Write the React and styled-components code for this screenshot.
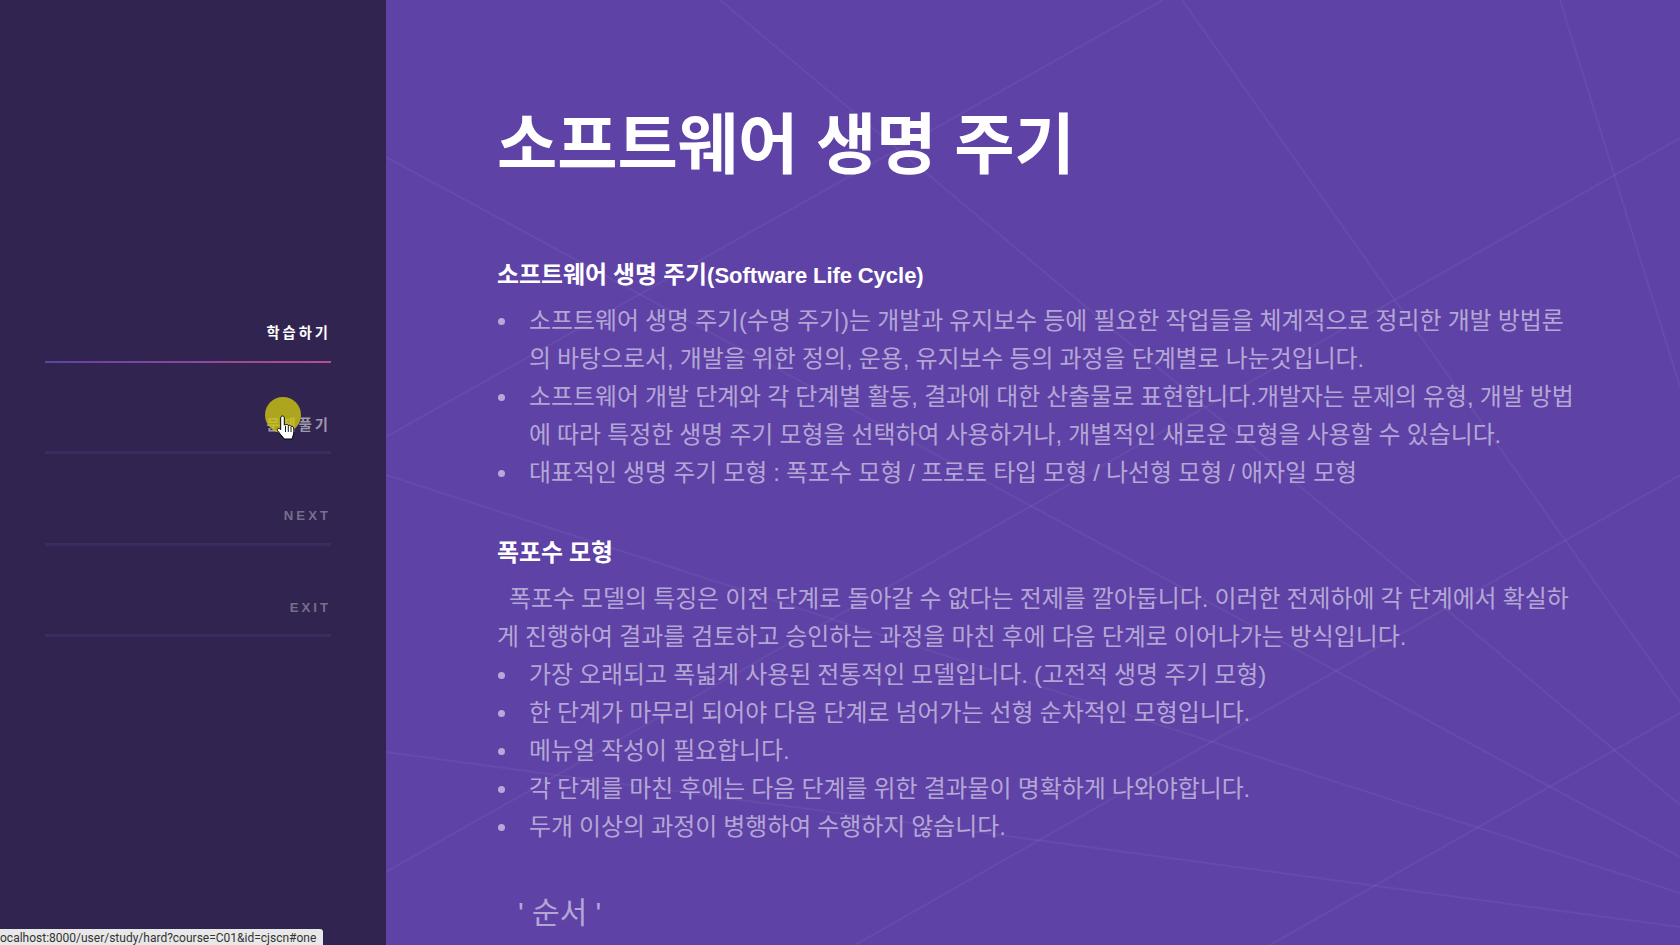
import React from 'react'
import styled, { createGlobalStyle } from 'styled-components'

const Global = createGlobalStyle`
  html, body { margin: 0; padding: 0; height: 100%; overflow: hidden; }
  body {
    background: #5e42a6;
    font-family: "Liberation Sans", "Noto Sans CJK KR", sans-serif;
    font-size: 23.9px;
    word-spacing: -0.5px;
    line-height: 38px;
    color: rgba(255,255,255,0.55);
  }
`

const Page = styled.div`
  position: relative;
  display: flex;
  width: 1680px;
  height: 945px;
  overflow: hidden;
`

const Sidebar = styled.aside`
  flex: 0 0 386px;
  height: 945px;
  background: #312450;
  display: flex;
  flex-direction: column;
  padding: 271px 55px 0 45px;
  box-sizing: border-box;
`

const NavLink = styled.a`
  display: flex;
  flex-direction: column;
  height: 91.5px;
  box-sizing: border-box;
  padding-top: 50px;
  text-align: right;
  font-size: ${props => props.latin ? '13.2px' : '14.3px'};
  line-height: 24px;
  font-weight: 700;
  letter-spacing: 3px;
  word-spacing: 0;
  color: ${props => props.tone || 'rgba(255,255,255,0.35)'};
  &::after {
    content: '';
    display: block;
    margin-top: auto;
    height: ${props => props.active ? '2px' : '2.64px'};
    background: ${props => props.active ? 'linear-gradient(to right, #5e42a6, #b74e91)' : '#3a2c60'};
  }
`

const Main = styled.main`
  position: relative;
  flex: 1;
  height: 945px;
  padding: 101px 100px 0 111px;
  box-sizing: border-box;
  overflow: hidden;
`

const BgLines = styled.svg`
  position: absolute;
  left: 0;
  top: 0;
  width: 1294px;
  height: 945px;
`

const Content = styled.div`
  position: relative;
`

const Title = styled.h1`
  margin: 0 0 67px;
  font-size: 65.5px;
  line-height: 90px;
  font-weight: 700;
  color: #fff;
`

const Heading = styled.h3`
  margin: 0 0 ${props => props.tight ? '9px' : '10px'};
  font-size: 23.9px;
  line-height: 34px;
  font-weight: 700;
  color: #fff;
`

const Latin = styled.span`
  font-size: 22px;
`

const List = styled.ul`
  margin: 0 0 ${props => props.gap || '45px'};
  padding: 0;
  list-style: none;
`

const Item = styled.li`
  display: grid;
  grid-template-columns: 32px 1fr;
  &::before {
    content: '';
    width: 7px;
    height: 7px;
    margin: 16px 0 0 1px;
    border-radius: 50%;
    background: rgba(255,255,255,0.55);
  }
`

const Para = styled.p`
  margin: 0;
  text-indent: 12px;
`

const Order = styled.p`
  margin: 0;
  padding-left: 21px;
  font-size: 30px;
  word-spacing: 0;
  line-height: 44px;
`

const StatusBar = styled.div`
  position: absolute;
  left: 0;
  bottom: 0;
  width: 323px;
  height: 16px;
  background: #e8e8e8;
  border-top-right-radius: 3px;
  color: #333;
  font-family: "Roboto", "Liberation Sans", sans-serif;
  font-size: 12px;
  word-spacing: 0;
  line-height: 19px;
  white-space: nowrap;
  overflow: hidden;
`

const CursorDot = styled.div`
  position: absolute;
  left: 265px;
  top: 397px;
  width: 36px;
  height: 36px;
  border-radius: 50%;
  background: rgba(205, 197, 17, 0.8);
`

const CursorHand = styled.svg`
  position: absolute;
  left: 276px;
  top: 415px;
  width: 20px;
  height: 25px;
`

const bgLines = [
  [1182, 0, 1680, 702],
  [1560, 0, 1680, 387],
  [1680, 138, 386, 872],
  [720, 0, 1680, 805],
  [386, 157, 1680, 857],
  [386, 475, 1680, 893],
  [386, 752, 1680, 927],
  [1163, 0, 386, 437],
  [1680, 475, 855, 945],
  [1680, 713, 1270, 945],
]

export default function App() {
  return (
    <>
      <Global />
      <Page>
        <Sidebar>
          <NavLink active tone="#fff">학습하기</NavLink>
          <NavLink tone="rgba(255,255,255,0.55)">문제풀기</NavLink>
          <NavLink latin>NEXT</NavLink>
          <NavLink latin>EXIT</NavLink>
        </Sidebar>
        <Main>
          <BgLines viewBox="386 0 1294 945">
            {bgLines.map((l, i) => (
              <line key={i} x1={l[0]} y1={l[1]} x2={l[2]} y2={l[3]} stroke="rgba(255,255,255,0.05)" strokeWidth="2" />
            ))}
          </BgLines>
          <Content>
            <Title>소프트웨어 생명 주기</Title>
            <Heading tight>소프트웨어 생명 주기<Latin>(Software Life Cycle)</Latin></Heading>
            <List gap="44px">
              <Item><span>소프트웨어 생명 주기(수명 주기)는 개발과 유지보수 등에 필요한 작업들을 체계적으로 정리한 개발 방법론의 바탕으로서, 개발을 위한 정의, 운용, 유지보수 등의 과정을 단계별로 나눈것입니다.</span></Item>
              <Item><span>소프트웨어 개발 단계와 각 단계별 활동, 결과에 대한 산출물로 표현합니다.개발자는 문제의 유형, 개발 방법에 따라 특정한 생명 주기 모형을 선택하여 사용하거나, 개별적인 새로운 모형을 사용할 수 있습니다.</span></Item>
              <Item><span>대표적인 생명 주기 모형 : 폭포수 모형 / 프로토 타입 모형 / 나선형 모형 / 애자일 모형</span></Item>
            </List>
            <Heading>폭포수 모형</Heading>
            <Para>폭포수 모델의 특징은 이전 단계로 돌아갈 수 없다는 전제를 깔아둡니다. 이러한 전제하에 각 단계에서 확실하게 진행하여 결과를 검토하고 승인하는 과정을 마친 후에 다음 단계로 이어나가는 방식입니다.</Para>
            <List>
              <Item><span>가장 오래되고 폭넓게 사용된 전통적인 모델입니다. (고전적 생명 주기 모형)</span></Item>
              <Item><span>한 단계가 마무리 되어야 다음 단계로 넘어가는 선형 순차적인 모형입니다.</span></Item>
              <Item><span>메뉴얼 작성이 필요합니다.</span></Item>
              <Item><span>각 단계를 마친 후에는 다음 단계를 위한 결과물이 명확하게 나와야합니다.</span></Item>
              <Item><span>두개 이상의 과정이 병행하여 수행하지 않습니다.</span></Item>
            </List>
            <Order>' 순서 '</Order>
          </Content>
        </Main>
        <CursorDot />
        <CursorHand viewBox="0 0 20 25">
          <path d="M6.500 1c1.100 0 1.800.8 1.800 1.900V10l1.400-.3c1-.5 2.200-.2 2.700.8 1-.5 2.200-.1 2.600.9 1.200-.4 2.500.3 2.700 1.600.3 2.800.2 5.300-.6 7.600-.4 1.100-.8 2.200-1 3.400H8c-.7-1.500-1.900-2.700-3.200-4.200L1.500 15.600c-1-1.300.7-3 2.100-1.900l1.100 1V2.900C4.700 1.800 5.400 1 6.500 1z" fill="#fff" stroke="#000" strokeWidth="1" />
          <path d="M9.500 11v6M12.300 11v6M15 12v5" stroke="#000" strokeWidth="0.9" fill="none" />
        </CursorHand>
        <StatusBar>ocalhost:8000/user/study/hard?course=C01&amp;id=cjscn#one</StatusBar>
      </Page>
    </>
  )
}
